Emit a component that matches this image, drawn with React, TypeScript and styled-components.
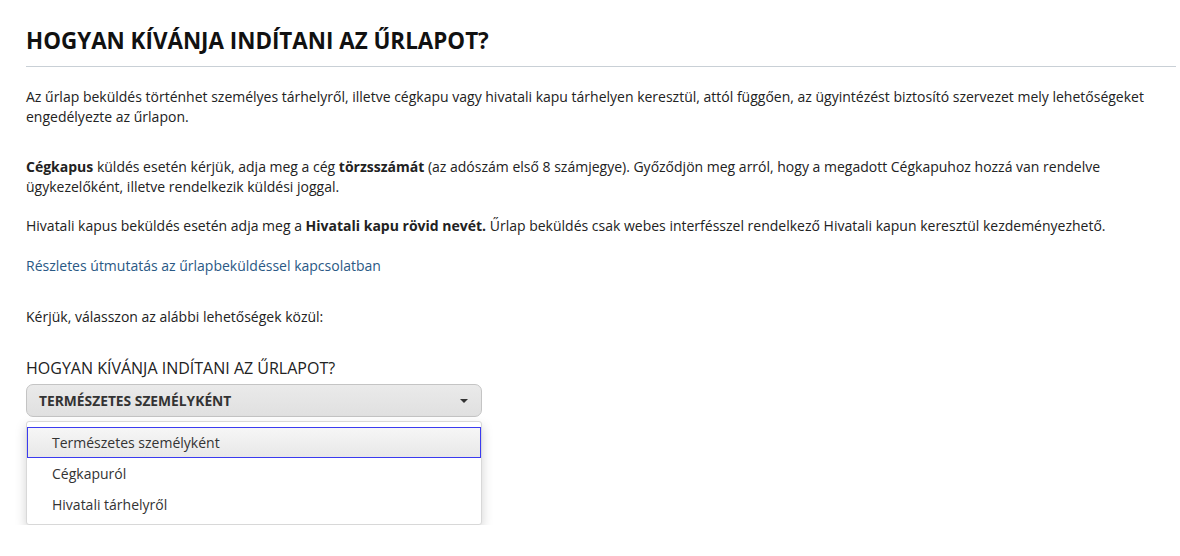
import React, { useState } from 'react';
import styled, { createGlobalStyle } from 'styled-components';

const GlobalStyle = createGlobalStyle`
  body {
    margin: 0;
    background: #fff;
    font-family: "Open Sans", "Liberation Sans", sans-serif;
    color: #222;
  }
`;

const Page = styled.div`
  padding: 26px 4px 0 26px;
`;

const Title = styled.h1`
  font-size: 22.4px;
  font-weight: 700;
  margin: 0;
  padding-bottom: 10px;
  line-height: 30px;
  color: #111;
  border-bottom: 1px solid #c9d0d6;
`;

const Text = styled.p<{ gap?: number }>`
  font-size: 14px;
  line-height: 20px;
  margin: ${({ gap }) => gap ?? 20}px 0 0;
`;

const Link = styled.a`
  color: #2a5985;
  text-decoration: none;
  cursor: pointer;
`;

const FieldLabel = styled.div`
  font-size: 16px;
  line-height: 22px;
  text-transform: uppercase;
  margin-top: 30px;
  color: #222;
`;

const Field = styled.div`
  width: 456px;
  margin-top: 5px;
  position: relative;
`;

const SelectBox = styled.div`
  height: 31px;
  border: 1px solid #c4c4c4;
  border-radius: 7px;
  background: linear-gradient(#eaeaea, #e0e0e0);
  display: flex;
  align-items: center;
  justify-content: space-between;
  padding: 0 12px;
  font-size: 13.8px;
  font-weight: 700;
  text-transform: uppercase;
  color: #333;
  cursor: pointer;
`;

const Caret = styled.span`
  width: 0;
  height: 0;
  border-left: 4px solid transparent;
  border-right: 4px solid transparent;
  border-top: 4px solid #333;
  margin-right: 1px;
`;

const Menu = styled.ul`
  list-style: none;
  margin: 4px 0 0;
  padding: 5px 0 4px;
  background: #fff;
  border: 1px solid #d8d8d8;
  border-radius: 3px;
  box-shadow: 0 5px 12px rgba(0, 0, 0, 0.18);
`;

const Option = styled.li<{ active: boolean }>`
  font-size: 14px;
  line-height: 29px;
  padding: 0 24px;
  color: #333;
  border: 1px solid ${({ active }) => (active ? '#3b3bf0' : 'transparent')};
  background: ${({ active }) => (active ? 'linear-gradient(#f6f6f6, #e8e8e8)' : '#fff')};
  cursor: pointer;
`;

const options = ['Természetes személyként', 'Cégkapuról', 'Hivatali tárhelyről'];

const App: React.FC = () => {
  const [active, setActive] = useState(0);

  return (
    <>
      <GlobalStyle />
      <Page>
        <Title>HOGYAN KÍVÁNJA INDÍTANI AZ ŰRLAPOT?</Title>

        <Text gap={20}>
          Az űrlap beküldés történhet személyes tárhelyről, illetve cégkapu vagy hivatali kapu tárhelyen keresztül, attól függően, az ügyintézést biztosító szervezet mely lehetőségeket engedélyezte az űrlapon.
        </Text>

        <Text gap={30}>
          <b>Cégkapus</b> küldés esetén kérjük, adja meg a cég <b>törzsszámát</b> (az adószám első 8 számjegye). Győződjön meg arról, hogy a megadott Cégkapuhoz hozzá van rendelve ügykezelőként, illetve rendelkezik küldési joggal.
        </Text>

        <Text gap={19}>
          Hivatali kapus beküldés esetén adja meg a <b>Hivatali kapu rövid nevét.</b> Űrlap beküldés csak webes interfésszel rendelkező Hivatali kapun keresztül kezdeményezhető.
        </Text>

        <Text gap={20}>
          <Link>Részletes útmutatás az űrlapbeküldéssel kapcsolatban</Link>
        </Text>

        <Text gap={31}>Kérjük, válasszon az alábbi lehetőségek közül:</Text>

        <FieldLabel>Hogyan kívánja indítani az űrlapot?</FieldLabel>
        <Field>
          <SelectBox>
            {options[active]}
            <Caret />
          </SelectBox>
          <Menu>
            {options.map((o, i) => (
              <Option key={o} active={i === active} onClick={() => setActive(i)}>
                {o}
              </Option>
            ))}
          </Menu>
        </Field>
      </Page>
    </>
  );
};

export default App;
